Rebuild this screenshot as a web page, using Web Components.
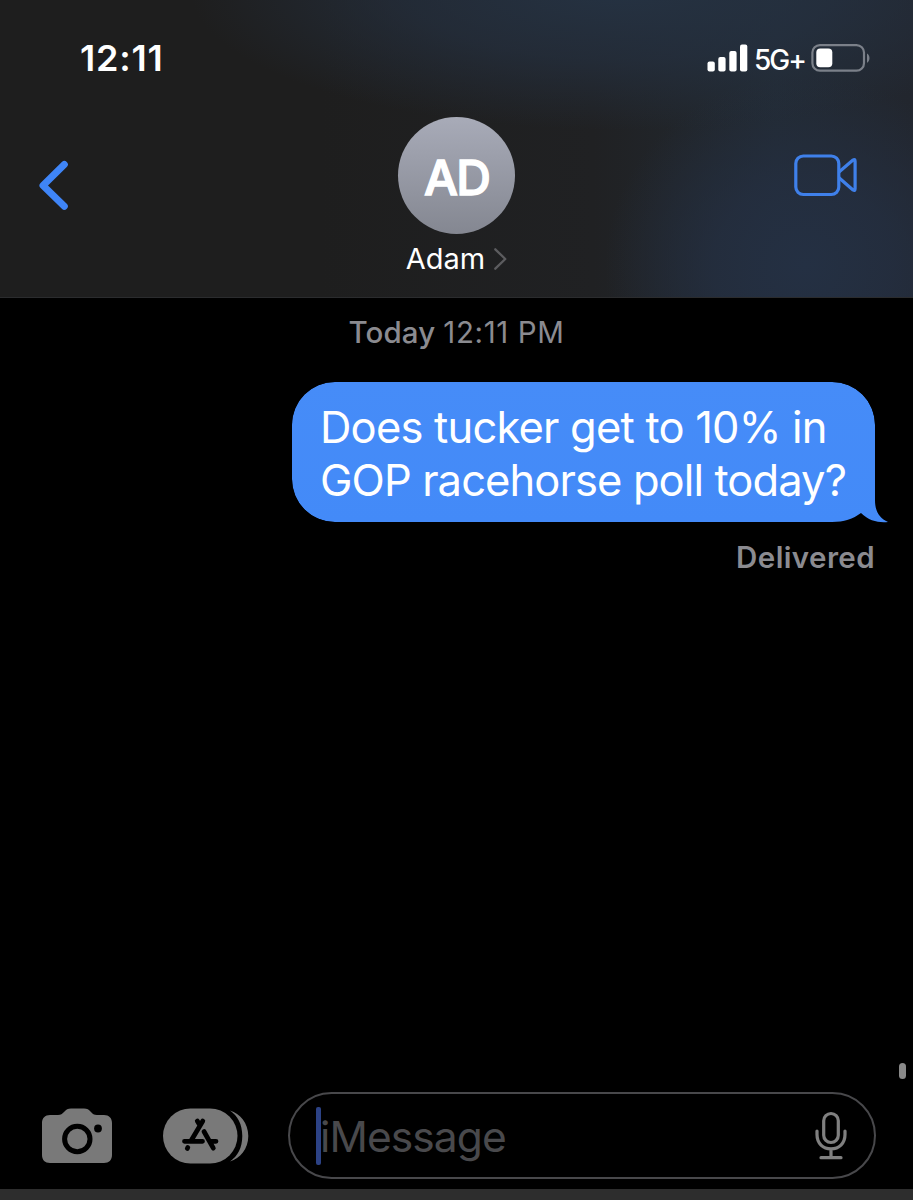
<!DOCTYPE html>
<html lang="en">
<head>
<meta charset="utf-8">
<title>Messages</title>
<style>
  html, body {
    margin: 0;
    background: #000;
  }
  body {
    font-family: Inter, "Liberation Sans", sans-serif;
    color: #fff;
  }
</style>
</head>
<body>
<chat-screen>
  <chat-header slot="header" name="Adam" initials="AD">
    <status-bar time="12:11" network="5G+"></status-bar>
  </chat-header>
  <time-stamp day="Today">12:11 PM</time-stamp>
  <message-bubble status="Delivered">
    <bubble-line style="--track: -0.8px">Does tucker get to 10% in</bubble-line>
    <bubble-line style="--track: -0.9px">GOP racehorse poll today?</bubble-line>
  </message-bubble>
  <compose-bar slot="footer" placeholder="iMessage"></compose-bar>
</chat-screen>

<script>
class BaseElement extends HTMLElement {
  constructor() {
    super();
    this.attachShadow({ mode: 'open' });
  }

  connectedCallback() {
    this.shadowRoot.innerHTML = this.template();
  }
}

class ChatScreen extends BaseElement {
  template() {
    return `
      <style>
        :host {
          display: flex;
          flex-direction: column;
          position: relative;
          width: 913px;
          height: 1200px;
          overflow: hidden;
          background: #000;
        }
        main {
          flex: 1;
          display: flex;
          flex-direction: column;
        }
        .keyboard-edge {
          height: 11px;
          background: #2d2d2d;
        }
        .scroll-thumb {
          position: absolute;
          right: 7px;
          top: 1063px;
          width: 7px;
          height: 16px;
          border-radius: 4px;
          background: #8a8a8a;
        }
      </style>
      <slot name="header"></slot>
      <main><slot></slot></main>
      <slot name="footer"></slot>
      <div class="keyboard-edge"></div>
      <div class="scroll-thumb"></div>
    `;
  }
}

class StatusBar extends BaseElement {
  template() {
    return `
      <style>
        :host {
          display: flex;
          justify-content: space-between;
          align-items: center;
          height: 36px;
          padding: 40px 42px 0 80px;
        }
        .time {
          font-size: 36px;
          font-weight: 600;
          letter-spacing: 0.8px;
        }
        .right {
          display: flex;
          align-items: center;
        }
        .network {
          width: 50px;
          margin: 4px 7px 0 6px;
          font-size: 28px;
          font-weight: 500;
          letter-spacing: -2px;
          white-space: nowrap;
        }
        svg { display: block; }
      </style>
      <span class="time">${this.getAttribute('time')}</span>
      <div class="right">
        <svg width="41" height="28" viewBox="0 0 41 28" fill="#fff">
          <rect x="0.5" y="17.5" width="7.3" height="10" rx="2"/>
          <rect x="11.3" y="13" width="7.3" height="14.5" rx="2"/>
          <rect x="22.3" y="7" width="7.3" height="20.5" rx="2"/>
          <rect x="33" y="0.5" width="7.3" height="27" rx="2"/>
        </svg>
        <span class="network">${this.getAttribute('network')}</span>
        <svg width="60" height="28" viewBox="0 0 60 28">
          <rect x="1.4" y="1.1" width="51.6" height="25.6" rx="7.5" fill="none" stroke="#7b8089" stroke-width="2.2"/>
          <rect x="5.3" y="4.6" width="16" height="18.6" rx="4" fill="#fff"/>
          <path d="M56 9.5c3.3 1.6 3.3 7.6 0 9.2z" fill="#7b8089"/>
        </svg>
      </div>
    `;
  }
}

class ContactAvatar extends BaseElement {
  template() {
    return `
      <style>
        :host {
          display: flex;
          align-items: center;
          justify-content: center;
          width: 117px;
          height: 117px;
          border-radius: 50%;
          background: linear-gradient(#a8abb8, #848791);
          font-size: 48px;
          font-weight: 500;
          letter-spacing: -1.8px;
          -webkit-text-stroke: 1.4px #fff;
        }
        span { padding-top: 3px; }
      </style>
      <span><slot></slot></span>
    `;
  }
}

class ChatHeader extends BaseElement {
  template() {
    return `
      <style>
        :host {
          display: block;
          box-sizing: border-box;
          height: 298px;
          border-bottom: 1px solid #2b2c2e;
          background:
            radial-gradient(ellipse 200px 190px at 805px 265px, #243043 0%, rgba(36, 47, 66, 0.75) 45%, rgba(36, 45, 60, 0) 100%),
            radial-gradient(ellipse 430px 140px at 620px -10px, #253242 0%, rgba(37, 49, 66, 0.65) 50%, rgba(37, 45, 60, 0) 100%),
            linear-gradient(90deg, #1e1e1e 35%, #202123 65%, #222a33 85%, #22262e 100%);
        }
        .row {
          display: grid;
          grid-template-columns: 1fr auto 1fr;
          align-items: start;
          padding: 41px 55px 0 38px;
        }
        .back { margin-top: 42px; }
        .call {
          justify-self: end;
          margin-top: 36px;
        }
        .contact {
          display: flex;
          flex-direction: column;
          align-items: center;
          margin-left: 17px;
        }
        .name {
          display: flex;
          align-items: center;
          gap: 9px;
          margin-top: 7px;
          font-size: 29px;
          line-height: 36px;
        }
        svg { display: block; }
      </style>
      <slot></slot>
      <div class="row">
        <svg class="back" width="32" height="52" viewBox="0 0 32 52" fill="none" stroke="#3f85f7" stroke-width="7" stroke-linecap="round" stroke-linejoin="round">
          <path d="M26.3 5.4 5 26.5 26.3 47.2"/>
        </svg>
        <div class="contact">
          <contact-avatar>${this.getAttribute('initials')}</contact-avatar>
          <div class="name">
            <span>${this.getAttribute('name')}</span>
            <svg width="13" height="22" viewBox="0 0 13 22" fill="none" stroke="#5c5c5f" stroke-width="2.3" stroke-linecap="round" stroke-linejoin="round">
              <path d="M1.3 1.3 11.3 11 1.3 20.7"/>
            </svg>
          </div>
        </div>
        <svg class="call" width="64" height="44" viewBox="0 0 64 44" fill="none" stroke="#3f80ea" stroke-width="3.2" stroke-linejoin="round">
          <rect x="1.8" y="3" width="43" height="38.5" rx="7.5"/>
          <path d="M45 19 59 7Q61.1 5.5 61.1 8.5V35.5Q61.1 38.5 59 37L45 24.7"/>
        </svg>
      </div>
    `;
  }
}

class TimeStamp extends BaseElement {
  template() {
    return `
      <style>
        :host {
          display: flex;
          justify-content: center;
          gap: 8px;
          padding-top: 16px;
          font-size: 29.5px;
          line-height: 36px;
          letter-spacing: 0.1px;
          color: #8b8b90;
        }
        b { font-weight: 500; }
        span { letter-spacing: 0.6px; }
      </style>
      <b>${this.getAttribute('day')}</b><span><slot></slot></span>
    `;
  }
}

class BubbleLine extends BaseElement {
  template() {
    return `
      <style>
        :host {
          display: block;
          white-space: nowrap;
          letter-spacing: var(--track, 0);
        }
      </style>
      <slot></slot>
    `;
  }
}

class MessageBubble extends BaseElement {
  template() {
    return `
      <style>
        :host {
          display: flex;
          flex-direction: column;
          align-items: flex-end;
          padding: 32px 38px 0 0;
        }
        .bubble {
          position: relative;
          box-sizing: border-box;
          width: 583px;
          height: 140px;
          padding: 19px 0 0 28px;
          border-radius: 43px 43px 0 43px;
          background: linear-gradient(#468cf8, #438af8);
          clip-path: path("M43 0H540C564 0 583 19 583 43V118C583 129 587 136 596 140C587 141 577 139 569 131C561 137 552 140 540 140H43C19 140 0 121 0 97V43C0 19 19 0 43 0Z");
          font-size: 43.5px;
          line-height: 53px;
        }
        /* fills the part of the tail that sticks out past the bubble */
        .bubble::after {
          content: "";
          position: absolute;
          right: -14px;
          bottom: -1px;
          width: 14px;
          height: 30px;
          background: #438af8;
        }
        .status {
          margin-top: 17px;
          font-size: 29.5px;
          font-weight: 600;
          line-height: 36px;
          letter-spacing: 0.4px;
          color: #8b8b90;
        }
      </style>
      <div class="bubble"><slot></slot></div>
      <div class="status">${this.getAttribute('status')}</div>
    `;
  }
}

class ComposeBar extends BaseElement {
  template() {
    return `
      <style>
        :host {
          display: flex;
          align-items: center;
          height: 87px;
          padding: 0 37px 10px 42px;
        }
        svg { display: block; flex: none; }
        .apps { margin-left: 50px; }
        .field {
          flex: 1;
          display: flex;
          align-items: center;
          box-sizing: border-box;
          height: 87px;
          margin-left: 39px;
          padding: 0 26px 0 26px;
          border: 2px solid #48484b;
          border-radius: 44px;
        }
        .caret {
          width: 5px;
          height: 58px;
          border-radius: 2px;
          background: #2c4285;
        }
        .placeholder {
          flex: 1;
          margin-left: -1px;
          padding-top: 1px;
          font-size: 42.5px;
          letter-spacing: -0.9px;
          color: #49494c;
        }
      </style>
      <svg width="71" height="56" viewBox="0 0 71 56">
        <path fill="#797979" d="M8 7H16C19 7 20 6 22 4C24 1.5 26 .5 29 .5H42C45 .5 47 1.5 49 4C50.5 6 52 7 55 7H62C67 7 70 10 70 15V47C70 52 67 55 62 55H8C3 55 0 52 0 47V15C0 10 3 7 8 7Z"/>
        <circle cx="35.3" cy="31" r="12.7" fill="none" stroke="#000" stroke-width="5"/>
        <circle cx="56" cy="20.5" r="3.9"/>
      </svg>
      <svg class="apps" width="86" height="56" viewBox="0 0 86 56">
        <rect x="0" y=".5" width="74.5" height="55" rx="27.5" fill="#797979"/>
        <path fill="#797979" d="M67 2.5C77 5.5 85.3 15 85.3 28C85.3 41 77 50.5 67 53.5C74.5 48 79.3 40 79.3 28C79.3 16 74.5 8 67 2.5Z"/>
        <g fill="none" stroke="#000" stroke-width="4.8" stroke-linecap="round">
          <path d="M21.5 33.3H39.5M46.5 33.3H53M34.3 13 37 17.5M39.8 13 28.5 32M41 23.5 50.3 40.2M24.8 39.6 24.3 40.4"/>
        </g>
      </svg>
      <div class="field">
        <div class="caret"></div>
        <span class="placeholder">${this.getAttribute('placeholder')}</span>
        <svg width="34" height="50" viewBox="0 0 34 50" fill="none" stroke="#808080" stroke-width="3.2" stroke-linecap="round">
          <rect x="9.7" y="2.5" width="14.6" height="29" rx="7.3"/>
          <path d="M3 20V23.5C3 32.5 9 37.8 17 37.8C25 37.8 31 32.5 31 23.5V20M17 37.8V46.5M7 46.7H27"/>
        </svg>
      </div>
    `;
  }
}

customElements.define('chat-screen', ChatScreen);
customElements.define('status-bar', StatusBar);
customElements.define('contact-avatar', ContactAvatar);
customElements.define('chat-header', ChatHeader);
customElements.define('time-stamp', TimeStamp);
customElements.define('bubble-line', BubbleLine);
customElements.define('message-bubble', MessageBubble);
customElements.define('compose-bar', ComposeBar);
</script>
</body>
</html>
